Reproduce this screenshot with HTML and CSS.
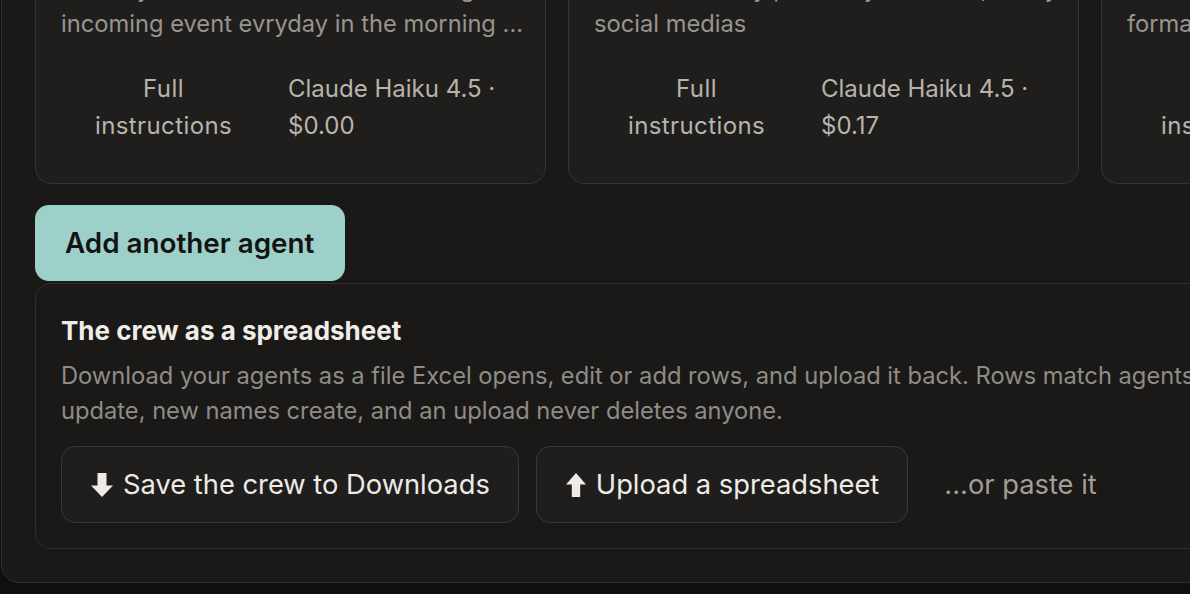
FILE: index.html
```
<!DOCTYPE html>
<html lang="en">
<head>
  <meta charset="UTF-8" />
  <meta name="viewport" content="width=device-width, initial-scale=1" />
  <title>Your crew</title>
  <link rel="stylesheet" href="styles.css">
</head>
<body>
  <section class="panel">
    <div class="cards">
      <article class="card">
        <h3>Morning briefing</h3>
        <p class="card-desc">Reads your calendar and sends a digest of every<br>incoming event evryday in the morning ...</p>
        <div class="card-meta">
          <span class="meta-link">Full instructions</span>
          <span>Claude Haiku 4.5 · $0.00</span>
        </div>
      </article>
      <article class="card">
        <h3>Social writer</h3>
        <p class="card-desc">Drafts a weekly post (in your voice, ready) for<br>social medias</p>
        <div class="card-meta">
          <span class="meta-link">Full instructions</span>
          <span>Claude Haiku 4.5 · $0.17</span>
        </div>
      </article>
      <article class="card">
        <h3>Report builder</h3>
        <p class="card-desc">Collects the numbers from your sheets, then<br>formats them as a short report</p>
        <div class="card-meta">
          <span class="meta-link">Full instructions</span>
          <span>Claude Haiku 4.5 · $0.04</span>
        </div>
      </article>
    </div>

    <button class="add-btn" type="button">Add another agent</button>

    <div class="sheet">
      <h4>The crew as a spreadsheet</h4>
      <p class="sheet-desc">Download your agents as a file Excel opens, edit or add rows, and upload it back. Rows match agents by name: existing names<br>update, new names create, and an upload never deletes anyone.</p>
      <div class="sheet-actions">
        <button class="ghost-btn" type="button">
          <svg width="22" height="24" viewBox="0 0 22 24"><path d="M6.5 0h9v12.5H22L11 24 0 12.5h6.5z"/></svg>
          Save the crew to Downloads
        </button>
        <button class="ghost-btn" type="button">
          <svg width="20" height="24" viewBox="0 0 20 24"><path d="M10 0l10 11.5h-5.8V24H5.8V11.5H0z"/></svg>
          Upload a spreadsheet
        </button>
        <span class="paste-link">...or paste it</span>
      </div>
    </div>
  </section>
</body>
</html>
```

FILE: styles.css
```
body {
  font-family: Inter, "Noto Sans", sans-serif;
  background-color: #0f0f0e;
  margin: 0;
  padding: 0 0 0 1px;
  overflow: hidden;
  height: 594px;
}
.panel {
  box-sizing: border-box;
  width: 1650px;
  margin-top: -121px;
  padding: 32px 32px 33px 33px;
  background-color: #1a1918;
  border: 1px solid #2f2e2c;
  border-radius: 18px;
}
.cards {
  display: flex;
  gap: 22px;
}
.card {
  box-sizing: border-box;
  flex: none;
  width: 511px;
  padding: 20px 25px 39px;
  background-color: #1f1e1c;
  border: 1px solid #353432;
  border-radius: 16px;
}
.card h3 {
  margin: 0 0 8px;
  font-size: 23px;
  line-height: 30px;
  color: #eeebe6;
}
.card-desc {
  margin: 0 0 29px;
  font-size: 23.7px;
  line-height: 35px;
  color: #98948e;
  white-space: nowrap;
}
.card-meta {
  display: grid;
  grid-template-columns: 205px 1fr;
  column-gap: 22px;
  font-size: 24px;
  line-height: 37px;
  color: #b8b4ad;
}
.meta-link {
  padding: 0 20px;
  text-align: center;
  letter-spacing: 0.4px;
}
.add-btn {
  display: block;
  margin-top: 21px;
  height: 76px;
  padding: 0 31px 0 30px;
  font-family: inherit;
  font-size: 27.8px;
  font-weight: 600;
  color: #131313;
  background-color: #9dd0c8;
  border: none;
  border-radius: 14px;
}
.sheet {
  margin-top: 2px;
  padding: 32px 25px 25px;
  border: 1px solid #302f2d;
  border-radius: 16px;
}
.sheet h4 {
  margin: 0 0 12px;
  font-size: 26px;
  line-height: 30px;
  color: #f0ede8;
}
.sheet-desc {
  margin: 0 0 18px;
  font-size: 23.7px;
  line-height: 35px;
  color: #8f8c86;
  white-space: nowrap;
}
.sheet-actions {
  display: flex;
  align-items: center;
  gap: 17px;
}
.ghost-btn {
  display: flex;
  align-items: center;
  gap: 10px;
  height: 77px;
  padding: 0 28px 0 29px;
  font-family: inherit;
  font-size: 27.3px;
  color: #eeebe6;
  background-color: #1f1e1d;
  border: 1px solid #3a3937;
  border-radius: 14px;
}
.ghost-btn svg {
  fill: #eeebe6;
}
.paste-link {
  padding-left: 19px;
  font-size: 27.3px;
  color: #a29e97;
}
```
